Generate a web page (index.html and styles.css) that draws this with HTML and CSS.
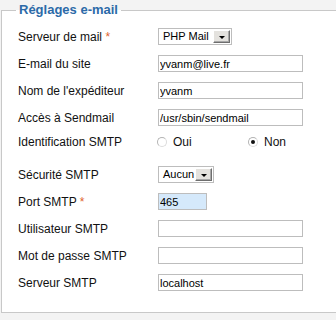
FILE: index.html
```html
<!DOCTYPE html>
<html lang="fr">
<head>
<meta charset="utf-8">
<title>Réglages e-mail</title>
<link rel="stylesheet" href="styles.css">
</head>
<body>
<div class="page">
<fieldset class="panel">
  <legend class="panel-title">Réglages e-mail</legend>
  <div class="form">
    <div class="row">
      <label class="key">Serveur de mail <span class="req">*</span></label>
      <div class="select select-mailer"><span class="select-value">PHP Mail</span><span class="select-btn"><span class="arrow"></span></span></div>
    </div>
    <div class="row">
      <label class="key">E-mail du site</label>
      <input class="field" type="text" value="yvanm@live.fr">
    </div>
    <div class="row">
      <label class="key">Nom de l'expéditeur</label>
      <input class="field" type="text" value="yvanm">
    </div>
    <div class="row">
      <label class="key">Accès à Sendmail</label>
      <input class="field" type="text" value="/usr/sbin/sendmail">
    </div>
    <div class="row row-radio">
      <label class="key">Identification SMTP</label>
      <div class="radios">
        <span class="radio-opt radio-oui"><span class="radio"></span><span class="radio-label">Oui</span></span>
        <span class="radio-opt"><span class="radio radio-checked"></span><span class="radio-label">Non</span></span>
      </div>
    </div>
    <div class="row">
      <label class="key">Sécurité SMTP</label>
      <div class="select select-secure"><span class="select-value">Aucun</span><span class="select-btn"><span class="arrow"></span></span></div>
    </div>
    <div class="row">
      <label class="key">Port SMTP <span class="req">*</span></label>
      <input class="field field-port" type="text" value="465">
    </div>
    <div class="row">
      <label class="key">Utilisateur SMTP</label>
      <input class="field" type="text" value="">
    </div>
    <div class="row">
      <label class="key">Mot de passe SMTP</label>
      <input class="field" type="password" value="">
    </div>
    <div class="row">
      <label class="key">Serveur SMTP</label>
      <input class="field" type="text" value="localhost">
    </div>
  </div>
</fieldset>
</div>
</body>
</html>
```
FILE: styles.css
```css
html, body {
  margin: 0;
  padding: 0;
  overflow: hidden;
  background: #f3f3f3;
}
body {
  font-family: "Liberation Sans", Arial, sans-serif;
  font-size: 12px;
  color: #111;
}
.page {
  width: 336px;
  overflow: hidden;
  padding-bottom: 8px;
}
.panel {
  margin: 2px -40px 0 1px;
  border: 1px solid #c8c8c8;
  padding: 5px 0 16px 14px;
  background: #fff;
  min-width: 0;
}
.panel-title {
  padding: 0 3px;
  font-size: 13px;
  line-height: 16px;
  font-weight: bold;
  color: #2c6aa8;
}
.form {
  display: flex;
  flex-direction: column;
}
.row {
  display: flex;
  align-items: center;
  height: 27px;
}
.row-radio {
  height: 22px;
  margin-bottom: 8px;
}
.key {
  width: 140px;
  padding-left: 2px;
  flex: none;
  line-height: 14px;
}
.req {
  color: #e0642e;
}
.field {
  box-sizing: border-box;
  width: 145px;
  height: 17px;
  margin: 0;
  padding: 0 1px;
  border: 1px solid #bdbdbd;
  font-family: "Liberation Sans", Arial, sans-serif;
  font-size: 11px;
  color: #000;
  background: #fff;
  outline: none;
}
.field-port {
  width: 49px;
  background: #d5e9fb;
}
.select {
  box-sizing: border-box;
  height: 17px;
  border: 1px solid #bdbdbd;
  padding: 1px;
  display: flex;
  align-items: center;
  justify-content: space-between;
  background: #fff;
}
.select-mailer { width: 74px; }
.select-secure { width: 56px; }
.select-value {
  padding-left: 3px;
  font-size: 11px;
  line-height: 13px;
  color: #000;
}
.select-btn {
  box-sizing: border-box;
  width: 17px;
  height: 13px;
  background: #e4e2de;
  border-style: solid;
  border-width: 1px;
  border-color: #fff #6e6e6e #6e6e6e #fff;
  box-shadow: inset -1px -1px 0 #a8a8a8;
  display: flex;
  align-items: center;
  justify-content: center;
}
.arrow {
  width: 0;
  height: 0;
  border-left: 3px solid transparent;
  border-right: 3px solid transparent;
  border-top: 3px solid #000;
  margin-top: 1px;
}
.radios {
  display: flex;
  align-items: center;
}
.radio-opt {
  display: flex;
  align-items: center;
}
.radio-oui {
  width: 91px;
}
.radio {
  box-sizing: border-box;
  width: 10px;
  height: 10px;
  border-radius: 50%;
  border: 1px solid #b4b4b4;
  border-right-color: #dcdcdc;
  border-bottom-color: #dcdcdc;
  background: #fff;
  margin-left: -1px;
  position: relative;
}
.radio-checked::after {
  content: "";
  position: absolute;
  left: 2px;
  top: 2px;
  width: 4px;
  height: 4px;
  border-radius: 50%;
  background: #111;
}
.radio-label {
  margin-left: 6px;
  font-size: 12px;
}
```
